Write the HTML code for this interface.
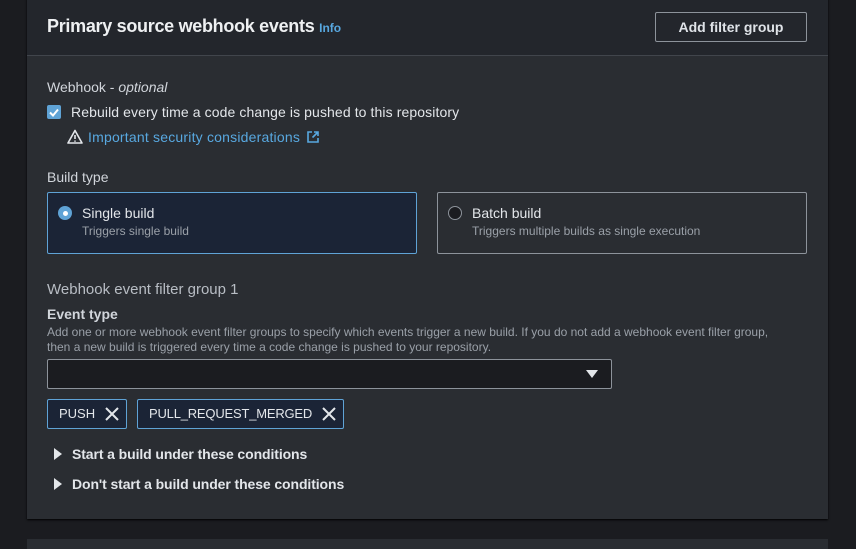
<!DOCTYPE html>
<html><head><style>
*{box-sizing:border-box;margin:0;padding:0}
body{width:856px;height:542px;background:#1b1c20;font-family:"Liberation Sans",sans-serif;color:#d1d5db;position:relative;overflow:hidden}
.a{position:absolute;white-space:nowrap}
</style></head><body>
<div class="a" style="left:27px;top:-2px;width:801px;height:521px;background:#2a2d32;box-shadow:0 1px 2px #000"></div>
<div class="a" style="left:27px;top:-2px;width:801px;height:58px;background:#23262c;border-bottom:1px solid #41454c"></div>
<div class="a" style="left:27px;top:539px;width:801px;height:10px;background:#2a2d32"></div>
<div class="a" style="left:47px;top:16px;font-size:18px;font-weight:bold;color:#eef0f2;letter-spacing:-0.3px">Primary source webhook events <span style="font-size:12px;color:#58a8e0;letter-spacing:0">Info</span></div>
<div class="a" style="left:655px;top:12px;width:152px;height:30px;border:1px solid #8d939b;border-radius:2px;font-size:14px;font-weight:bold;color:#dfe3e8;text-align:center;line-height:28px">Add filter group</div>
<div class="a" style="left:47px;top:79px;font-size:14px;color:#d1d5db">Webhook - <i>optional</i></div>
<div class="a" style="left:47px;top:105px;width:14px;height:14px;background:#5fa3d6;border-radius:2px"><svg width="14" height="14"><path d="M3 7.5l3 3 5-6" stroke="#fff" stroke-width="2" fill="none"/></svg></div>
<div class="a" style="left:71px;top:104px;font-size:14px;color:#e3e6ea;letter-spacing:0.1px">Rebuild every time a code change is pushed to this repository</div>
<svg class="a" style="left:67px;top:129px" width="16" height="15"><path d="M8 1.5L1 14h14z" stroke="#e3e6ea" stroke-width="1.6" fill="none" stroke-linejoin="round"/><path d="M8 6v4M8 11.5v1.2" stroke="#e3e6ea" stroke-width="1.6"/></svg>
<div class="a" style="left:88px;top:129px;font-size:14px;color:#58a8e0;letter-spacing:0.2px">Important security considerations</div>
<svg class="a" style="left:306px;top:130px" width="14" height="14"><path d="M6 2H2v10h10V8M8 2h4v4M12 2L6.5 7.5" stroke="#58a8e0" stroke-width="1.6" fill="none"/></svg>
<div class="a" style="left:47px;top:169px;font-size:14px;color:#d1d5db">Build type</div>
<div class="a" style="left:47px;top:192px;width:370px;height:62px;background:#1b2436;border:1px solid #5fa3d6;border-radius:2px"></div>
<div class="a" style="left:58px;top:206px;width:14px;height:14px;border-radius:50%;background:#5fa3d6"><div style="margin:4.5px;width:5px;height:5px;border-radius:50%;background:#fff"></div></div>
<div class="a" style="left:82px;top:205px;font-size:14px;color:#e3e6ea">Single build</div>
<div class="a" style="left:82px;top:224px;font-size:12px;color:#9aa0a8">Triggers single build</div>
<div class="a" style="left:437px;top:192px;width:370px;height:62px;border:1px solid #8d939b;border-radius:2px"></div>
<div class="a" style="left:448px;top:206px;width:14px;height:14px;border-radius:50%;border:1.5px solid #8d939b;background:#1b1c20"></div>
<div class="a" style="left:472px;top:205px;font-size:14px;color:#e3e6ea">Batch build</div>
<div class="a" style="left:472px;top:224px;font-size:12px;color:#9aa0a8">Triggers multiple builds as single execution</div>
<div class="a" style="left:47px;top:281px;font-size:15px;color:#b8bdc4">Webhook event filter group 1</div>
<div class="a" style="left:47px;top:306px;font-size:14px;font-weight:bold;color:#d1d5db">Event type</div>
<div class="a" style="left:47px;top:325px;font-size:12px;color:#9aa0a8;line-height:15px;white-space:normal;width:740px">Add one or more webhook event filter groups to specify which events trigger a new build. If you do not add a webhook event filter group, then a new build is triggered every time a code change is pushed to your repository.</div>
<div class="a" style="left:47px;top:359px;width:565px;height:30px;background:#1b1c20;border:1px solid #8d939b;border-radius:2px"></div>
<svg class="a" style="left:586px;top:369px" width="12" height="10"><path d="M0 1h12L6 9z" fill="#e3e6ea"/></svg>
<div class="a" style="left:47px;top:399px;width:80px;height:30px;background:#1b2436;border:1px solid #5fa3d6;border-radius:2px;font-size:13px;color:#e3e6ea;line-height:28px;padding-left:11px">PUSH</div>
<svg class="a" style="left:105px;top:407px" width="14" height="14"><path d="M1 1l12 12M13 1L1 13" stroke="#e3e6ea" stroke-width="2"/></svg>
<div class="a" style="left:137px;top:399px;width:207px;height:30px;background:#1b2436;border:1px solid #5fa3d6;border-radius:2px;font-size:13px;color:#e3e6ea;line-height:28px;padding-left:11px;letter-spacing:-0.2px">PULL_REQUEST_MERGED</div>
<svg class="a" style="left:322px;top:407px" width="14" height="14"><path d="M1 1l12 12M13 1L1 13" stroke="#e3e6ea" stroke-width="2"/></svg>
<svg class="a" style="left:54px;top:448px" width="9" height="12"><path d="M0 0l8 6-8 6z" fill="#e3e6ea"/></svg>
<div class="a" style="left:72px;top:446px;font-size:14px;font-weight:bold;color:#e3e6ea;letter-spacing:-0.1px">Start a build under these conditions</div>
<svg class="a" style="left:54px;top:478px" width="9" height="12"><path d="M0 0l8 6-8 6z" fill="#e3e6ea"/></svg>
<div class="a" style="left:72px;top:476px;font-size:14px;font-weight:bold;color:#e3e6ea;letter-spacing:-0.1px">Don't start a build under these conditions</div>
</body></html>
